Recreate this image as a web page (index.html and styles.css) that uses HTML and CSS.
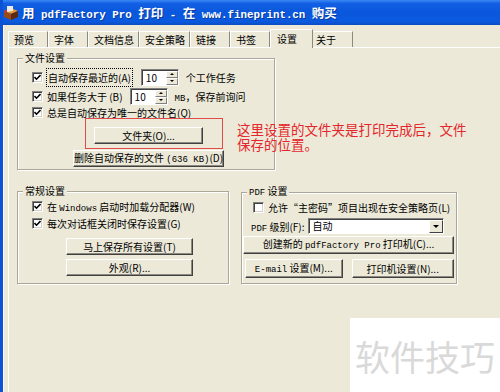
FILE: index.html
```html
<!DOCTYPE html>
<html lang="zh-CN">
<head>
  <meta charset="UTF-8">
  <meta name="viewport" content="width=device-width, initial-scale=1.0">
  <title>pdfFactory Pro 设置</title>
  <link rel="stylesheet" href="styles.css">
</head>
<body>
  <div class="window">
    <div class="titlebar">
      <svg class="app-icon" width="16" height="16" viewBox="0 0 16 16">
        <path d="M1 6 L8 3 L15 6 L8 9 Z" fill="#e9962f"/>
        <path d="M1 6 L8 9 L8 15 L1 12 Z" fill="#9a4a18"/>
        <path d="M8 9 L15 6 L15 12 L8 15 Z" fill="#5c2a0e"/>
        <path d="M4 1 L10 1 L10 6 L4 7 Z" fill="#ecebe6"/>
        <path d="M1 6 L4 4.5 L4 7 L1 8 Z" fill="#c8322a"/>
      </svg>
      <span class="title">用<span class="lat"> pdfFactory Pro </span>打印<span class="lat"> - </span>在<span class="lat"> www.fineprint.cn </span>购买</span>
    </div>

    <div class="client">
      <div class="tabs">
        <div class="tab">预览</div>
        <div class="tab">字体</div>
        <div class="tab">文档信息</div>
        <div class="tab">安全策略</div>
        <div class="tab">链接</div>
        <div class="tab">书签</div>
        <div class="tab active">设置</div>
        <div class="tab">关于</div>
      </div>

      <div class="panel">
        <!-- 文件设置 -->
        <fieldset class="group group-file">
          <legend>文件设置</legend>
          <div class="group-body">
            <div class="row">
              <span class="check"><svg viewBox="0 0 7 7"><path d="M0.5 3 L2.5 5.2 L6.5 1"/></svg></span>
              <span class="focus">自动保存最近的(A)</span>
              <span class="spin spin-a">
                <span class="spin-text">10</span>
                <span class="spin-btns"><span class="spin-btn up"></span><span class="spin-btn down"></span></span>
              </span>
              <span class="after-a">个工作任务</span>
            </div>
            <div class="row row-mid">
              <span class="check"><svg viewBox="0 0 7 7"><path d="M0.5 3 L2.5 5.2 L6.5 1"/></svg></span>
              <span>如果任务大于 (B)</span>
              <span class="spin spin-b">
                <span class="spin-text">10</span>
                <span class="spin-btns"><span class="spin-btn up"></span><span class="spin-btn down"></span></span>
              </span>
              <span class="after-b"><span class="lat">MB</span>，保存前询问</span>
            </div>
            <div class="row row-short">
              <span class="check"><svg viewBox="0 0 7 7"><path d="M0.5 3 L2.5 5.2 L6.5 1"/></svg></span>
              <span>总是自动保存为唯一的文件名(Q)</span>
            </div>
            <button class="btn btn-folder">文件夹(O)...</button>
            <button class="btn btn-delete">删除自动保存的文件 <span class="lat">(636 KB)</span>(D)</button>
          </div>
        </fieldset>

        <div class="group-row">
          <!-- 常规设置 -->
          <fieldset class="group group-general">
            <legend>常规设置</legend>
            <div class="group-body">
              <div class="row row-short">
                <span class="check"><svg viewBox="0 0 7 7"><path d="M0.5 3 L2.5 5.2 L6.5 1"/></svg></span>
                <span>在 <span class="lat">Windows</span> 启动时加载分配器(W)</span>
              </div>
              <div class="row row-short">
                <span class="check"><svg viewBox="0 0 7 7"><path d="M0.5 3 L2.5 5.2 L6.5 1"/></svg></span>
                <span>每次对话框关闭时保存设置(G)</span>
              </div>
              <button class="btn btn-save">马上保存所有设置(T)</button>
              <button class="btn btn-look">外观(R)...</button>
            </div>
          </fieldset>

          <!-- PDF 设置 -->
          <fieldset class="group group-pdf">
            <legend><span class="lat">PDF</span> 设置</legend>
            <div class="group-body">
              <div class="row row-short pdf-check">
                <span class="check"></span>
                <span>允许“主密码”项目出现在安全策略页(L)</span>
              </div>
              <div class="row pdf-level">
                <span><span class="lat">PDF</span> 级别(F):</span>
                <span class="select">
                  <span class="select-value">自动</span>
                  <span class="select-btn"></span>
                </span>
              </div>
              <button class="btn btn-create">创建新的 <span class="lat">pdfFactory Pro</span> 打印机(C)...</button>
              <div class="btn-pair">
                <button class="btn btn-mail"><span class="lat">E-mail</span> 设置(M)...</button>
                <button class="btn btn-printer">打印机设置(N)...</button>
              </div>
            </div>
          </fieldset>
        </div>
      </div>
    </div>
  </div>

  <!-- annotation drawn over the dialog -->
  <div class="note-frame"></div>
  <p class="note">这里设置的文件夹是打印完成后，文件<br>保存的位置。</p>

  <div class="watermark">软件技巧</div>
</body>
</html>
```

FILE: styles.css
```css
body {
  margin: 0;
  width: 500px;
  height: 392px;
  overflow: hidden;
  position: relative;
  background: #ece9d8;
  font-family: "Noto Sans CJK SC", "Noto Sans", sans-serif;
  font-size: 10px;
  color: #000;
}

.lat {
  font-family: "Liberation Mono", "DejaVu Sans Mono", monospace;
  font-size: 9px;
}

.window {
  height: 392px;
  border-left: 3px solid #0b53d4;
}

/* Title bar */
.titlebar {
  height: 25px;
  display: flex;
  align-items: center;
  gap: 3px;
  background: linear-gradient(#3a88f4 0%, #135fe4 14%, #0957dc 50%, #0a5ae0 86%, #0b4cc0 100%);
  color: #fff;
  font-weight: bold;
  font-size: 12.5px;
}

.app-icon {
  flex: none;
}

.title {
  white-space: pre;
  text-shadow: 1px 1px 0 #0a3a9c;
}

.title .lat {
  font-size: 10.8px;
}

/* Client area */
.client {
  padding: 4px 0 0 4px;
  border-left: 1px solid #faf9f3;
  height: 363px;
}

.tabs {
  display: flex;
  align-items: flex-end;
  height: 18px;
}

.tab {
  box-sizing: border-box;
  min-width: 40px;
  height: 16px;
  padding: 0 4px 0 5px;
  border: 1px solid;
  border-color: #fff #8c8a80 transparent #fff;
  border-bottom: 0;
  line-height: 15px;
  white-space: nowrap;
}

.tab.active {
  min-width: 43px;
  height: 19px;
  margin-bottom: -1px;
  padding-left: 6px;
  line-height: 17px;
  background: #ece9d8;
  position: relative;
  z-index: 1;
}

.tab.active + .tab {
  border-left-color: transparent;
  padding-left: 2px;
}

.panel {
  border-top: 1px solid #fff;
  border-left: 1px solid #fff;
  padding: 4px 0 0 8px;
  height: 340px;
}

/* Group boxes */
.group {
  margin: 0;
  padding: 0;
  min-width: 0;
  box-sizing: border-box;
  border: 1px solid #aca899;
  box-shadow: 1px 1px 0 #fff, inset 1px 1px 0 #fff;
}

.group legend {
  margin-left: 5px;
  padding: 0 2px;
  font-size: 10px;
  line-height: 12px;
  background: #ece9d8;
}

.group-body {
  display: flex;
  flex-direction: column;
}

.group-file {
  width: 258px;
}

.group-file .group-body {
  padding: 3px 9px 2px 14px;
}

.group-row {
  display: flex;
  gap: 12px;
  margin-top: 15px;
}

.group-general {
  width: 212px;
}

.group-general .group-body {
  padding: 2px 0 5px 14px;
}

.group-pdf {
  width: 216px;
}

.group-pdf .group-body {
  padding: 1px 2px 5px 1px;
}

/* Rows */
.row {
  display: flex;
  align-items: center;
  gap: 4px;
  height: 20px;
  white-space: nowrap;
}

.row-mid {
  height: 18px;
}

.row-short {
  height: 14px;
}

.group-general .row-short + .row-short {
  margin-top: 3px;
}

.check {
  flex: none;
  box-sizing: border-box;
  width: 11px;
  height: 11px;
  background: #fff;
  border: 1px solid;
  border-color: #808080 #fff #fff #808080;
  box-shadow: inset 1px 1px 0 #404040, inset -1px -1px 0 #d4d0c8;
  display: flex;
  align-items: center;
  justify-content: center;
}

.check svg {
  width: 7px;
  height: 7px;
  fill: none;
  stroke: #000;
  stroke-width: 1.6;
}

.focus {
  outline: 1px dotted #000;
  padding: 1px 1px;
}

/* Spin boxes */
.spin {
  display: flex;
  box-sizing: border-box;
  width: 38px;
  height: 17px;
  background: #fff;
  border: 1px solid;
  border-color: #808080 #fff #fff #808080;
  box-shadow: inset 1px 1px 0 #404040;
}

.spin-text {
  flex: 1;
  padding: 1px 0 0 4px;
  line-height: 13px;
}

.spin-btns {
  width: 12px;
  display: flex;
  flex-direction: column;
  padding: 1px 0 0 0;
}

.spin-btn {
  flex: 1;
  box-sizing: border-box;
  background: #ece9d8;
  border: 1px solid;
  border-color: #fff #808080 #808080 #fff;
  display: flex;
  align-items: center;
  justify-content: center;
}

.spin-btn.up::after {
  content: "";
  border-left: 2px solid transparent;
  border-right: 2px solid transparent;
  border-bottom: 2px solid #000;
}

.spin-btn.down::after {
  content: "";
  border-left: 2px solid transparent;
  border-right: 2px solid transparent;
  border-top: 2px solid #000;
}

.spin-a {
  margin-left: 5px;
}

.after-a {
  margin-left: 3px;
}

.spin-b {
  margin-left: 3px;
}

.after-b {
  margin-left: 3px;
}

/* Buttons */
.btn {
  box-sizing: border-box;
  height: 17px;
  padding: 0;
  font: inherit;
  color: #000;
  background: #ece9d8;
  border: 1px solid;
  border-color: #fff #404040 #404040 #fff;
  box-shadow: inset -1px -1px 0 #8c8a80;
  white-space: nowrap;
  line-height: 14px;
}

.btn-folder {
  width: 109px;
  margin: 8px auto 0;
}

.btn-delete {
  width: 151px;
  margin: 6px auto 0;
}

.btn-save {
  width: 127px;
  margin: 8px 0 0 34px;
}

.btn-look {
  width: 127px;
  margin: 4px 0 0 34px;
}

/* PDF group */
.pdf-check {
  margin-left: 10px;
}

.pdf-level {
  height: 16px;
  margin: 4px 0 0 8px;
  gap: 3px;
}

.select {
  display: flex;
  box-sizing: border-box;
  width: 136px;
  height: 16px;
  background: #fff;
  border: 1px solid;
  border-color: #808080 #fff #fff #808080;
  box-shadow: inset 1px 1px 0 #404040;
}

.select-value {
  flex: 1;
  padding: 1px 0 0 4px;
  line-height: 12px;
}

.select-btn {
  width: 14px;
  margin: 1px 0 0 0;
  box-sizing: border-box;
  background: #ece9d8;
  border: 1px solid;
  border-color: #fff #404040 #404040 #fff;
  display: flex;
  align-items: center;
  justify-content: center;
}

.select-btn::after {
  content: "";
  border-left: 3px solid transparent;
  border-right: 3px solid transparent;
  border-top: 3px solid #000;
}

.btn-create {
  width: 211px;
  height: 18px;
  margin-top: 2px;
}

.btn-pair {
  display: flex;
  gap: 9px;
  margin: 5px 0 0 2px;
}

.btn-mail {
  width: 99px;
  height: 19px;
}

.btn-printer {
  width: 104px;
  height: 19px;
}

/* Annotation over the dialog */
.note-frame {
  position: absolute;
  left: 85px;
  top: 118px;
  width: 136px;
  height: 29px;
  border: 1px solid #e04a4a;
}

.note {
  position: absolute;
  left: 237px;
  top: 122px;
  margin: 0;
  color: #e4262c;
  font-size: 13.5px;
  line-height: 14.5px;
  white-space: nowrap;
}

.watermark {
  position: absolute;
  left: 350px;
  top: 318px;
  width: 150px;
  height: 74px;
  box-sizing: border-box;
  padding: 20px 0 0 5px;
  background: #fff;
  color: #d9d9d9;
  font-size: 35px;
  line-height: 35px;
  white-space: nowrap;
}
```
